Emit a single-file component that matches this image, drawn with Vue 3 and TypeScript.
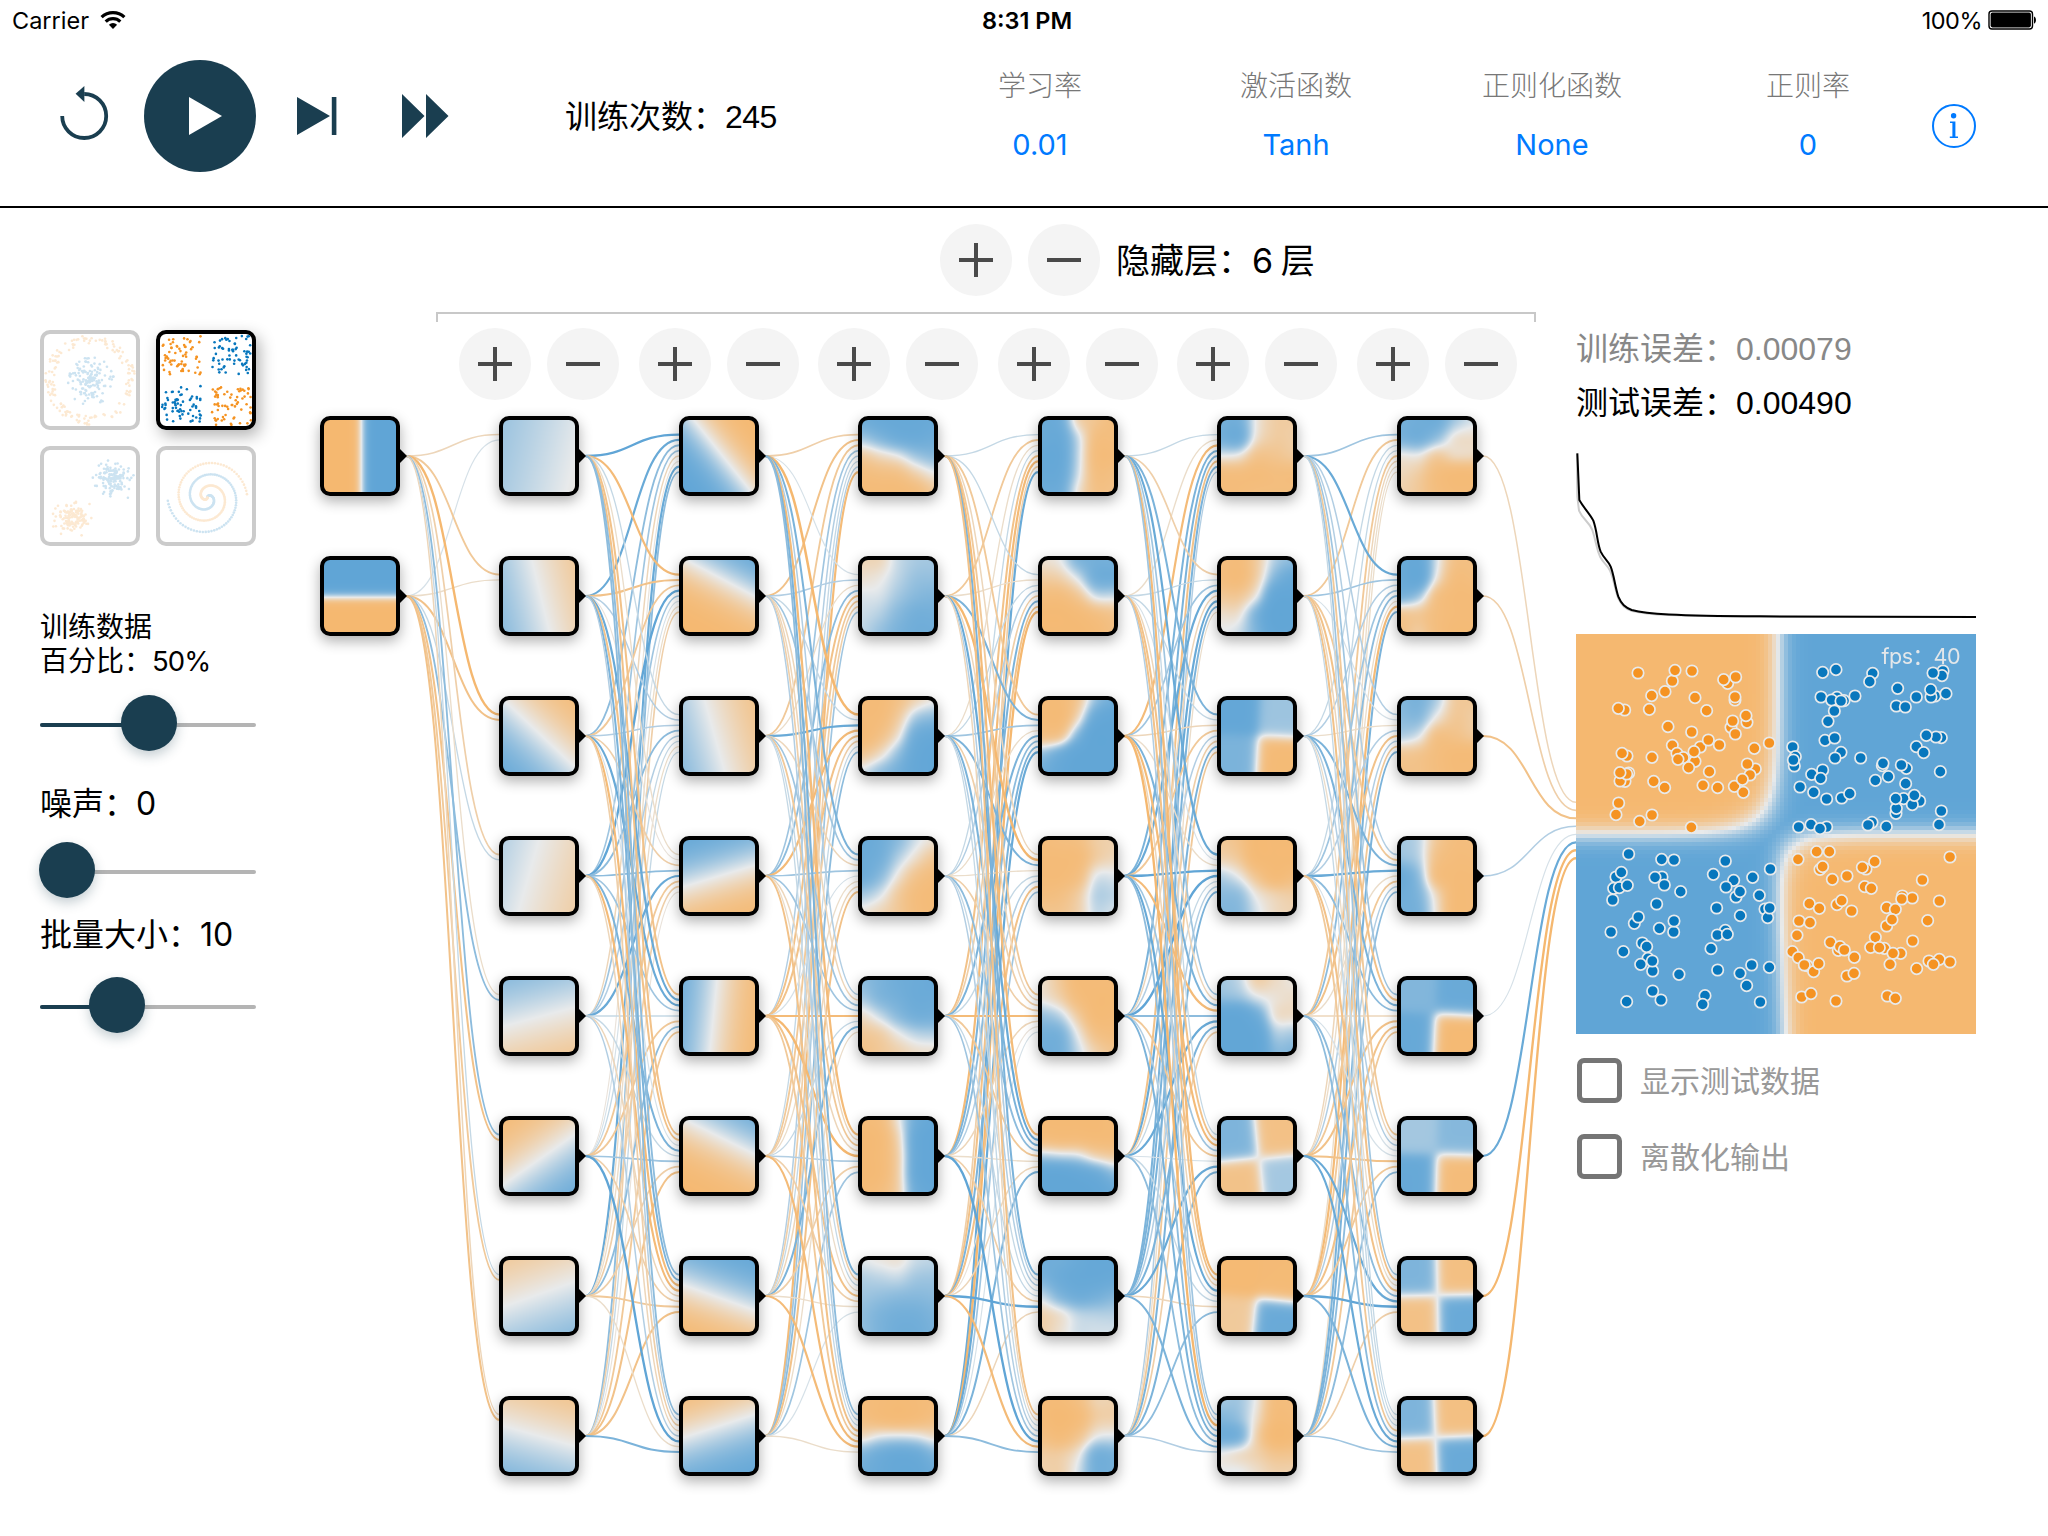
<script setup lang="ts">
import { onMounted, ref } from 'vue'

type Rgb = [number, number, number]

const ORANGE: Rgb = [245, 184, 112]
const NEUTRAL: Rgb = [232, 234, 235]
const BLUE: Rgb = [96, 165, 214]

function mix(value: number): Rgb {
  const t = Math.min(1, Math.abs(value))
  const end = value < 0 ? ORANGE : BLUE
  return [0, 1, 2].map((i) => Math.round(NEUTRAL[i] + (end[i] - NEUTRAL[i]) * t)) as Rgb
}

function parse(text: string): number[] {
  return text.trim().split(/[\s,]+/).map(Number)
}

/* ---------- network ---------- */

// A neuron's surface: three numbers are a plane (dx, dy, bias), twenty-five a 5×5 grid,
// seven are quadrant levels (tl, tr, bl, br) with the crossing point and its slant.
const surfaces: string[][] = [
  ['56 0 -1', '0 -56 1'],
  [
    '-2 -.5 1', '-4.5 1.1 .11', '-5 5.3 .2', '-2.8 -.8 -.4',
    '-1.2 -4.5 .05', '4.2 6 -.3', '1.4 4 .1', '-1.4 5 0',
  ],
  [
    '-10 8 .5', '5.3 -10 -2.6', '-5 1.4 -.3', '-2.7 -9 0',
    '-9 -.9 -.7', '4.2 -8.5 -2.3', '3.2 -9 .2', '2.6 8 1.1',
  ],
  [
    '5 6 6.5 6.5 6, 2 3.5 5 5.5 5, -2.5 -1.2 0 2 3, -5 -4.5 -4 -2 -.3, -6 -6 -6 -5 -3',
    '-1.6 -1.4 .8 1.8 2, -.8 -.3 1.2 2.4 2.6, .3 .5 2 3.2 3.6, .8 1.5 3.2 4.5 4.5, 1.2 2.5 4 5 5',
    '-6 -6 -4 -1.6 -.2, -6 -5.5 -2.5 1.8 3, -6 -4 -.5 5 6.5, -3 -1 2.5 6.5 8, .5 2.5 4.5 7 8',
    '6 5 3 .6 -.8, 5.5 4.5 1.5 -1 -3, 5 3 -.5 -3.5 -5, 2 .5 -2.5 -5 -6, -.5 -1.5 -3 -5 -6',
    '3 4 5 5.5 6, 1.8 3.5 4.5 5.5 5.5, -1 .8 3 4.5 4.5, -3 -2.2 -.2 1.2 1.5, -3.8 -3 -2 -1 -.8',
    '-6 -5 -.5 5 7, -7 -6 -1.5 6 8, -7 -6 -2 6 8, -7 -6 -2 6 8, -6 -5 -2 5 7',
    '.2 -.3 -.6 .8 1.2, 1.5 1.2 1 2 2.2, 2.2 2.6 3 3.2 3, 2.8 3.8 4.5 4.5 3.8, 2.8 4 5 5 4.2',
    '-5.5 -6 -6.5 -6 -5.5, -4.5 -5.5 -6 -5.5 -4.5, -1.2 0 .3 0 -1, 3.5 5 6 5.5 3.5, 5 6 7 7 5.5',
  ],
  [
    '6 5 -1.5 -3.5 -5, 6 6 .8 -4.5 -5, 7 6.5 1 -5 -5.5, 6.5 6 .6 -4.5 -4.5, 5.5 5 -.5 -4 -4',
    '-.8 0 3.5 4.5 4.5, -2.5 -2 .5 4.5 5, -5 -5 -3 .5 .8, -7 -7 -6 -4.5 -3.5, -7 -7 -7 -6 -4.5',
    '-6 -6 -3 2.5 5, -6 -6 -1 6 8, -4 -3 3.5 9 9, 2.5 5 8 9 9, 5 7 9 9 9',
    '-5.5 -5 -4.5 -2.5 -2, -6 -6 -5.5 -2.5 -1.5, -6 -6 -4.5 0 .3, -5 -4.5 -2.5 1.2 1.2, -3.5 -3.5 -2 .9 .6',
    '-1 -3 -6 -6 -6, -.5 -2 -5 -6.5 -6.5, 2.5 1.2 -2.5 -6 -6, 4.5 4 -.2 -4 -5, 5 4.5 1 -2 -3.5',
    '-7 -7 -7 -7 -6, -5 -5.5 -5.5 -6 -6, 1.5 1 .5 -1.5 -2.5, 8 8 7 5.5 3, 9 9 9 8 6',
    '5 5 6 7 7, 4 5.5 6.5 6.5 6, 1 3.5 5 4.5 3.5, -1.8 -.6 1.2 1.5 1.5, -2 -.8 .6 .6 .6',
    '-6 -6 -4.5 -2 -2, -6 -7 -5.5 -2.5 -2, -4.5 -5.5 -3.5 -.2 .3, -2.5 -2.5 -.5 4 4, -2 -2 .5 4.5 4.5',
  ],
  [
    '4.5 4.5 -.3 -2.3 -2.5, 4.5 4.8 -.8 -2.5 -2.3, 0 -.5 -3.5 -3.5 -2.8, -5 -5 -5.5 -5 -5, -5.5 -5.5 -5 -5 -5',
    '-5 -5.5 -2.5 1.5 3, -5 -5.5 -2 3.5 6, -3 -3 .2 7 8, -1 -.6 4 9 9, 0 .8 4 8 8',
    '.97 .55 .8 -.95 .52 .5 -.05',
    '-3 -4 -7 -7 -7, -1.8 -3 -6.5 -7 -7, 1.3 -.2 -3.5 -6 -5, 3 2.5 -.5 -2 -2.5, 3.5 3.2 .5 -1.2 -1.8',
    '2 1 -2 -1.2 -.4, 3 2.5 .5 -.6 -1, 8 8 5 -.4 -1, 9 9 7.5 2 1.8, 9 9 8 3.5 3.5',
    '.78 -.82 -.8 .5 .52 .53 .1',
    '-.97 -.95 -.65 .93 .5 .53 -.1',
    '2 2 -.4 -5 -5, 3.5 2.5 -1 -5.5 -5.5, 5 4 -2 -6.5 -6, 0 -.8 -2 -3.5 -3.5, 0 0 -1 -2 -2',
  ],
  [
    '4.5 5 5 2 .5, 4 4.5 2.5 -.5 -1, -.3 -.3 -2.5 -1.5 -1.5, -1.5 -2.5 -5 -6 -6, -2 -3 -5 -6 -6',
    '6 6.5 .5 -4 -4.5, 6 6.5 -.5 -5 -5, 4 2 -4 -6 -6, -3 -3 -5 -6 -6, -4 -2.8 -5 -6.5 -6.5',
    '3.5 4 1.5 -2.5 -3, 3 3 -.5 -3 -2.5, 1.5 .2 -4 -4 -3, -3 -3.5 -5 -6 -6, -4 -4 -5 -6 -6',
    '2 1 -3 -5 -5, 2.5 1.2 -4 -5.5 -5.5, 5.5 2.5 -4.5 -6 -6, 5 3.5 -1.5 -6 -6, 4.5 4 -.8 -6 -6',
    '.75 .93 .95 -.97 .48 .47 -.05',
    '.5 .72 .95 -.92 .5 .48 -.03',
    '.78 -.85 -.82 .93 .51 .49 .02',
    '.78 -.85 -.82 .93 .48 .52 .04',
  ],
]

// weights[layer][target] lists one weight per source neuron, from -9 to 9.
const weights: string[][] = [
  ['-3 1', '-5 -2', '-8 -6', '-4 2', '-2 5', '5 -6', '2 -5', '-3 -6'],
  [
    '8 7 5 4 -3 -1 7 5', '-7 -6 -5 8 4 1 -2 -4', '2 3 3 5 3 2 -2 2', '-2 -1 -4 5 7 -5 -4 -1',
    '-6 7 7 4 2 -5 5 -5', '-6 -6 1 6 2 4 -4 -6', '5 6 -7 -7 -3 -4 -5 -6', '5 3 -4 -3 3 8 -2 6',
  ],
  [
    '-4 -6 -5 4 3 2 3 -7', '1 3 -2 5 -6 -5 -4 4', '-9 2 7 -7 -6 -4 2 5', '6 4 -3 4 1 -2 -3 -6',
    '3 -3 4 4 -7 2 6 -2', '-7 -3 -5 -3 -8 3 -4 4', '6 -4 2 -2 -6 -4 -2 1', '5 3 2 -6 -5 -7 -7 -2',
  ],
  [
    '2 -5 -2 2 -6 -7 -4 7', '2 -2 2 3 -4 6 -6 -8', '-5 6 4 -2 6 5 6 7', '-3 -8 6 -2 2 3 -6 4',
    '-5 -3 -4 -4 -7 -3 -1 1', '-7 7 6 5 -5 -2 -3 6', '6 3 3 2 2 -4 8 -3', '-6 -3 2 3 4 8 -7 5',
  ],
  [
    '2 -2 -7 6 6 -6 6 3', '-4 2 4 7 -3 7 6 -2', '6 2 -3 -5 3 -4 6 -5', '7 1 -2 8 8 2 3 6',
    '4 -3 6 -7 5 7 6 -4', '2 -6 -7 4 -5 1 7 6', '-7 -6 -3 7 3 2 -3 5', '4 3 -8 5 6 5 6 3',
  ],
  [
    '4 -5 2 2 -5 -3 -2 -2', '7 4 3 4 5 -2 -7 6', '3 1 -2 3 -6 3 -5 6', '3 -5 6 7 -2 -5 3 5',
    '4 -6 6 5 -3 -6 -6 -5', '-5 -3 3 1 1 -6 -5 5', '4 -6 -2 -6 5 7 8 -4', '2 2 2 -5 5 7 6 4',
  ],
  ['-3 -4 -6 3 1 7 -8 -8'],
]

const NODE = 80
const COLUMN_STEP = 179.5
const ROW_STEP = 140
const NODES_TOP = 208

interface Link { d: string; stroke: string; width: number }

function buildLinks(): Link[] {
  const links: Link[] = []
  weights.forEach((targets, layer) => {
    const isOutput = layer === weights.length - 1
    const sx = layer * COLUMN_STEP + NODE + 6
    const tx = isOutput ? 1256 : (layer + 1) * COLUMN_STEP
    targets.forEach((row, target) => {
      parse(row).forEach((w, source) => {
        const sy = NODES_TOP + source * ROW_STEP + NODE / 2
        const ty = isOutput
          ? 594.3 + source * 8
          : NODES_TOP + target * ROW_STEP + NODE / 2 + (source - 4) * 5.35
        const mid = (sx + tx) / 2
        links.push({
          d: `M${sx} ${sy}C${mid} ${sy} ${mid} ${ty} ${tx} ${ty}`,
          stroke: `rgb(${mix(w / 7.5).join(',')})`,
          width: 1 + Math.abs(w) * 0.17,
        })
      })
    })
  })
  return links
}
const links = buildLinks()

function cubic(p: number[], t: number): number {
  return p[1] + 0.5 * t * (p[2] - p[0] + t * (2 * p[0] - 5 * p[1] + 4 * p[2] - p[3] + t * (3 * (p[1] - p[2]) + p[3] - p[0])))
}

function at(grid: number[], col: number, row: number): number {
  const clamp = (n: number) => Math.max(0, Math.min(4, n))
  return grid[clamp(row) * 5 + clamp(col)]
}

function quadrants(s: number[], x: number, y: number): number {
  const [tl, tr, bl, br, cx, cy, slant] = s
  const step = (n: number) => 1 / (1 + Math.exp(-24 * n))
  const right = step(x - cx - slant * (y - 0.5))
  const low = step(y - cy + slant * (x - 0.5))
  return (tl * (1 - right) + tr * right) * (1 - low) + (bl * (1 - right) + br * right) * low
}

function surface(s: number[], x: number, y: number): number {
  if (s.length === 7) return quadrants(s, x, y)
  if (s.length === 3) return Math.tanh((s[0] * (x - 0.5) + s[1] * (y - 0.5) + s[2]) / 3.6)
  const c = Math.min(3, Math.floor(x * 4))
  const r = Math.min(3, Math.floor(y * 4))
  const rows = [-1, 0, 1, 2].map((dr) =>
    cubic([-1, 0, 1, 2].map((dc) => at(s, c + dc, r + dr)), x * 4 - c))
  return Math.tanh(cubic(rows, y * 4 - r) / 3.6)
}

function paint(canvas: HTMLCanvasElement, field: (x: number, y: number) => number) {
  const n = canvas.width
  const ctx = canvas.getContext('2d')!
  const image = ctx.createImageData(n, n)
  for (let j = 0; j < n; j++) {
    for (let i = 0; i < n; i++) {
      const [r, g, b] = mix(field((i + 0.5) / n, (j + 0.5) / n))
      image.data.set([r, g, b, 255], (j * n + i) * 4)
    }
  }
  ctx.putImageData(image, 0, 0)
}

const network = ref<HTMLElement | null>(null)
const output = ref<HTMLCanvasElement | null>(null)

function corner(u: number, v: number, k: number): number {
  return -Math.log(Math.exp(-k * u) + Math.exp(-k * v)) / k
}

onMounted(() => {
  const flat = surfaces.flat()
  network.value!.querySelectorAll('canvas').forEach((canvas, i) => {
    const s = parse(flat[i])
    paint(canvas, (x, y) => surface(s, x, y))
  })
  paint(output.value!, (x, y) => {
    const topLeft = corner(0.504 - x, 0.499 - y, 15)
    const bottomRight = corner(x - 0.505 - 0.04 * (y - 0.5), y - 0.502, 20)
    return -Math.tanh(Math.max(topLeft, bottomRight) * 36)
  })
})

/* ---------- data points ---------- */

interface Dot { x: number; y: number; blue: boolean }

function dots(text: string, blue: boolean): Dot[] {
  return text.trim().split(/\s+/).map((pair) => {
    const [x, y] = pair.split(',').map(Number)
    return { x: (x - 48) / 3, y: (y - 42) / 3, blue }
  })
}

const outputDots: Dot[] = [
  ...dots(`234,159 337,183 345,151 396,153 315,215 275,227 268,268 194,270 175,265 405,233 440,272
    503,190 491,179 527,171 525,240 525,231 561,307 558,287 513,322 518,303 526,342 324,320 395,336
    337,376 351,400 370,413 354,418 421,381 445,360 478,375 405,424 402,395 386,443 448,455 429,496
    473,503 583,385 628,369 586,447 562,432 570,465 523,499 547,478 550,517 201,408 186,400 276,412
    206,459 195,484 180,483 200,462 180,458 281,484 314,503 176,549 168,584 276,585 239,604 394,622`, false),
  ...dots(`788,157 828,149 938,160 929,185 1149,153 1146,167 1119,159 1013,205 783,231 831,232 852,242
    815,240 843,243 885,228 823,273 804,304 1069,231 1125,228 1113,231 1112,209 1158,221 1009,258
    1036,261 795,361 824,354 698,381 706,410 703,438 700,420 843,397 825,414 902,414 1144,353 1128,351
    1099,346 1069,380 1091,398 967,437 969,430 1039,445 1024,435 1141,455 755,463 788,450 782,475
    720,501 761,517 800,537 845,534 869,521 946,481 985,470 1037,491 1008,580 1009,565 1031,536
    1007,536 1079,543 1057,554 1063,526 1144,573 1137,614 716,621 753,614 800,621 780,626 936,607
    924,615 979,620`, true),
  ...dots(`206,702 305,718 342,720 496,723 631,747 460,763 578,772 168,771 184,757 306,771 285,772
    313,795 161,805 178,803 202,796 158,840 362,815 521,781 498,801 528,831 540,815 598,826 290,852
    470,864 541,887 615,867 623,893 629,864 223,910 235,891 298,925 341,936 342,903 153,936 496,931
    472,945 502,943 453,986 247,969 260,980 190,995 264,1015 242,1033 278,1053 277,1023 357,1063
    473,1050 540,1060 575,1035 628,1042 560,1097 278,1113 303,1140 200,1145 435,1127 428,1153 601,1146`, true),
  ...dots(`714,718 770,695 808,695 780,748 788,740 817,778 861,768 918,747 907,742 944,725 1170,711
    1087,780 914,800 934,805 1027,828 1057,834 1025,837 1138,843 748,851 778,865 831,854 845,842
    875,873 980,863 1006,868 1103,902 717,903 750,908 711,946 980,918 996,899 946,952 1058,963
    811,967 835,991 840,980 853,990 697,995 715,1013 741,1037 733,1035 761,1055 776,1031 883,1012
    932,982 973,985 958,983 1022,1000 999,1000 990,1033 1070,1046 1107,1023 1138,1018 1120,1033
    1170,1026 861,1068 882,1060 725,1131 753,1121 828,1143 982,1128 1006,1135`, false),
]

function random(seed: number) {
  let s = seed
  return () => {
    s = (s * 1664525 + 1013904223) % 4294967296
    return s / 4294967296
  }
}

function circleSet(): Dot[] {
  const rnd = random(11)
  const list: Dot[] = []
  for (let i = 0; i < 150; i++) {
    const a = rnd() * Math.PI * 2
    const inner = rnd() * 24
    list.push({ x: 46 + Math.sin(a) * inner, y: 47 + Math.cos(a) * inner, blue: true })
    const b = rnd() * Math.PI * 2
    const outer = 36 + rnd() * 9
    list.push({ x: 46 + Math.sin(b) * outer, y: 46 + Math.cos(b) * outer, blue: false })
  }
  return list
}

function xorSet(): Dot[] {
  const rnd = random(5)
  const list: Dot[] = []
  for (let i = 0; i < 260; i++) {
    const right = i % 2 === 1
    const bottom = i % 4 > 1
    list.push({
      x: 2 + rnd() * 39 + (right ? 50 : 0),
      y: 2 + rnd() * 39 + (bottom ? 50 : 0),
      blue: right !== bottom,
    })
  }
  return list
}

function gaussSet(): Dot[] {
  const rnd = random(23)
  const bell = () => (rnd() + rnd() + rnd() + rnd() - 2) * 13
  return Array.from({ length: 280 }, (_, i) =>
    i % 2 ? { x: 69 + bell(), y: 29 + bell(), blue: true } : { x: 28 + bell(), y: 68 + bell(), blue: false })
}

function spiralSet(): Dot[] {
  const list: Dot[] = []
  for (const blue of [true, false]) {
    for (let i = 0; i < 130; i++) {
      const r = (i / 130) * 40
      const t = (1.75 * i / 130) * 2 * Math.PI + (blue ? 0 : Math.PI)
      list.push({ x: 47.4 + r * Math.sin(t), y: 47.5 - r * Math.cos(t), blue })
    }
  }
  return list
}

const datasets = [
  { name: 'circle', points: circleSet(), active: false },
  { name: 'xor', points: xorSet(), active: true },
  { name: 'gauss', points: gaussSet(), active: false },
  { name: 'spiral', points: spiralSet(), active: false },
]

const params = [
  { label: '学习率', value: '0.01' },
  { label: '激活函数', value: 'Tanh' },
  { label: '正则化函数', value: 'None' },
  { label: '正则率', value: '0' },
]

const sliders = [
  { key: 'ratio', lead: '训练数据', label: '百分比：', value: '50%', fill: 109 },
  { key: 'noise', lead: '', label: '噪声：', value: '0', fill: 27 },
  { key: 'batch', lead: '', label: '批量大小：', value: '10', fill: 77 },
]
</script>

<template>
  <div class="app">
    <div class="status">
      <div class="carrier">
        <span class="carrier-name">Carrier</span>
        <svg width="26" height="20" viewBox="0 0 26 20">
          <g fill="none" stroke="#000" stroke-width="3.2">
            <path d="M1.6 7.2A16.4 16.4 0 0 1 24.4 7.2" />
            <path d="M5.7 11.6A10.6 10.6 0 0 1 20.3 11.6" />
          </g>
          <path d="M13 19L8.9 14.7A6 6 0 0 1 17.1 14.7Z" />
        </svg>
      </div>
      <div class="clock">8:31 PM</div>
      <div class="battery">
        <span class="battery-text">100%</span>
        <svg width="50" height="20" viewBox="0 0 50 20">
          <rect x="1" y="1" width="43.5" height="18" rx="3" fill="none" stroke="#000" stroke-width="1.4" />
          <rect x="2.6" y="2.6" width="40.3" height="14.8" rx="1.8" />
          <path d="M46 6.4C48.6 7.2 48.6 12.8 46 13.6Z" />
        </svg>
      </div>
    </div>

    <header class="toolbar">
      <div class="controls">
        <svg class="reset" width="56" height="60" viewBox="56 84 56 60">
          <path d="M62.2 116A22 22 0 1 0 84.2 94" fill="none" stroke="#1a3e50" stroke-width="3.8" />
          <path d="M75.6 93.7L84.4 86V102Z" fill="#1a3e50" />
        </svg>
        <div class="play">
          <svg width="33" height="38" viewBox="0 0 33 38"><path d="M0 0L33 19L0 38Z" fill="#fff" /></svg>
        </div>
        <svg class="step" width="40" height="38" viewBox="0 0 40 38">
          <path d="M0 0L33 19L0 38ZM34.8 0H39.4V38H34.8Z" fill="#1a3e50" />
        </svg>
        <svg class="fast" width="47" height="44" viewBox="0 0 47 44">
          <path d="M0 0L22.5 22L0 44ZM24 0L46.5 22L24 44Z" fill="#1a3e50" />
        </svg>
      </div>
      <div class="epochs">训练次数：<span class="helv">245</span></div>
      <div class="params">
        <div v-for="p in params" :key="p.label" class="param">
          <div class="param-label">{{ p.label }}</div>
          <div class="param-value">{{ p.value }}</div>
        </div>
      </div>
      <svg class="info" width="46" height="46" viewBox="0 0 46 46">
        <circle cx="23" cy="23" r="21" fill="none" stroke="#007aff" stroke-width="2" />
        <circle cx="22.6" cy="12.8" r="2.7" fill="#007aff" />
        <path d="M19 18.6H24.4V33.6H27V35H18.8V33.6H21.4V20H19Z" fill="#007aff" />
      </svg>
    </header>

    <main class="body">
      <aside class="left">
        <div class="datasets">
          <div v-for="d in datasets" :key="d.name" class="dataset" :class="{ active: d.active }">
            <svg width="92" height="92" viewBox="0 0 92 92">
              <circle
                v-for="(p, i) in d.points" :key="i" :cx="p.x" :cy="p.y" r="1.3"
                :fill="p.blue ? '#0877bd' : '#f59322'"
              />
            </svg>
          </div>
        </div>
        <div v-for="s in sliders" :key="s.key" class="setting" :class="s.key">
          <div class="setting-label">
            <div v-if="s.lead">{{ s.lead }}</div>
            <div>{{ s.label }}<span class="setting-value">{{ s.value }}</span></div>
          </div>
          <div class="track">
            <div class="fill" :style="{ width: s.fill + 'px' }"><i class="thumb"></i></div>
          </div>
        </div>
      </aside>

      <section ref="network" class="network">
        <svg class="links" width="1256" height="1328" viewBox="0 0 1256 1328">
          <path
            v-for="(l, i) in links" :key="i" :d="l.d" :stroke="l.stroke" :stroke-width="l.width" fill="none"
          />
        </svg>
        <div class="layer-count">
          <i class="round plus"></i><i class="round"></i>
          <span class="layer-text">隐藏层：6 层</span>
        </div>
        <div class="bracket"></div>
        <div class="layer-buttons">
          <div v-for="n in 6" :key="n" class="pair"><i class="round plus"></i><i class="round"></i></div>
        </div>
        <div class="layers">
          <div v-for="(layer, li) in surfaces" :key="li" class="layer">
            <div v-for="(s, ni) in layer" :key="ni" class="node">
              <canvas width="72" height="72"></canvas>
            </div>
          </div>
        </div>
      </section>

      <aside class="right">
        <div class="loss train">训练误差：<span class="helv">0.00079</span></div>
        <div class="loss">测试误差：<span class="helv">0.00490</span></div>
        <svg class="chart" width="402" height="168" viewBox="48 426 1206 504">
          <g fill="none" stroke-linejoin="round">
            <path
              stroke="#ccc" stroke-width="6"
              d="M50 430L52 560L57 602C68 628 85 632 97 660C110 700 108 714 121 742C132 762 143 766 150 782C161 806 164 836 175 866C186 888 196 896 216 903C260 914 340 919 600 920L1248 921"
            />
            <path
              stroke="#000" stroke-width="6"
              d="M52 430L58 570C72 595 90 612 100 632C112 665 111 698 122 725C133 748 145 752 152 770C162 795 165 830 175 860C185 884 195 892 215 900C260 912 340 918 600 919L1248 921"
            />
          </g>
        </svg>
        <div class="output">
          <canvas ref="output" width="100" height="100"></canvas>
          <svg class="points" width="400" height="400" viewBox="0 0 400 400">
            <circle
              v-for="(p, i) in outputDots" :key="i" :cx="p.x" :cy="p.y" r="5.7"
              :fill="p.blue ? '#0877bd' : '#f59322'" stroke="#e8eaeb" stroke-width="1.7"
            />
          </svg>
          <div class="fps">fps：40</div>
        </div>
        <label class="check"><i class="box"></i><span>显示测试数据</span></label>
        <label class="check"><i class="box"></i><span>离散化输出</span></label>
      </aside>
    </main>
  </div>
</template>

<style>
body {
  background: #fff;
  overflow: hidden;
}
</style>

<style scoped>
.app {
  width: 2048px;
  height: 1536px;
  display: flex;
  flex-direction: column;
  color: #000;
  font-family: Inter, 'Noto Sans CJK SC', sans-serif;
  font-weight: 400;
  white-space: nowrap;
  overflow: hidden;
}
.helv {
  font-family: 'Liberation Sans', sans-serif;
}
.status {
  height: 40px;
  display: grid;
  grid-template-columns: 1fr auto 1fr;
  align-items: center;
  padding: 0 10px 0 12px;
  font-size: 23.5px;
}
.carrier,
.battery {
  display: flex;
  align-items: center;
}
.carrier {
  gap: 11px;
}
.clock {
  font-weight: 600;
  font-size: 23.5px;
  padding: 1px 0 0 4px;
}
.battery {
  justify-content: flex-end;
  gap: 6px;
}
.battery-text {
  font-size: 23.5px;
  letter-spacing: -0.5px;
}
.toolbar {
  height: 168px;
  box-sizing: border-box;
  border-bottom: 2px solid #000;
  display: flex;
}
.controls {
  width: 565px;
  height: 152px;
  display: flex;
  align-items: center;
}
.reset {
  margin: 0 32px 4px 56px;
}
.play {
  width: 112px;
  height: 112px;
  border-radius: 50%;
  background: #1a3e50;
  display: flex;
  align-items: center;
  padding-left: 45px;
  box-sizing: border-box;
}
.step {
  margin-left: 41px;
}
.fast {
  margin-left: 65px;
}
.epochs {
  width: 347px;
  height: 152px;
  line-height: 153px;
  font-size: 32px;
}
.epochs .helv {
  letter-spacing: -0.5px;
}
.params {
  display: flex;
  padding-top: 24px;
}
.param {
  width: 256px;
  text-align: center;
}
.param-label {
  font-size: 28px;
  line-height: 44px;
  color: #777;
  font-weight: 300;
}
.param-value {
  font-size: 29px;
  line-height: 40px;
  margin-top: 17px;
  color: #007aff;
}
.info {
  margin: 63px 0 0 -5px;
}
.body {
  flex: 1;
  display: flex;
}
.left {
  width: 320px;
  box-sizing: border-box;
  padding: 122px 64px 0 40px;
}
.datasets {
  display: grid;
  grid-template-columns: 100px 100px;
  gap: 16px;
}
.dataset {
  width: 100px;
  height: 100px;
  box-sizing: border-box;
  border: 4px solid #000;
  border-radius: 10px;
  overflow: hidden;
  opacity: 0.2;
}
.dataset svg {
  display: block;
}
.dataset.active {
  opacity: 1;
  box-shadow: 4px 6px 16px rgba(0, 0, 0, 0.3);
}
.setting-label {
  font-size: 32px;
  line-height: 44px;
}
.ratio {
  margin-top: 65px;
}
.ratio .setting-label {
  font-size: 28px;
  line-height: 33.5px;
}
.ratio .setting-value {
  font-size: 27.5px;
  letter-spacing: -0.9px;
}
.noise {
  margin-top: 55px;
}
.noise .track {
  margin-top: 44px;
}
.batch {
  margin-top: 39px;
}
.track {
  height: 4px;
  border-radius: 2px;
  background: #b4b4b4;
  margin-top: 45px;
}
.batch .track {
  margin-top: 48px;
}
.fill {
  position: relative;
  height: 4px;
  border-radius: 2px;
  background: #1a3e50;
}
.thumb {
  position: absolute;
  right: -28px;
  top: -28px;
  width: 56px;
  height: 56px;
  border-radius: 50%;
  background: #1a3e50;
  box-shadow: 0 5px 12px rgba(26, 62, 80, 0.25);
}
.network {
  position: relative;
  width: 1256px;
  box-sizing: border-box;
  padding-top: 16px;
}
.links {
  position: absolute;
  left: 0;
  top: 0;
}
.layer-count {
  display: flex;
  align-items: center;
  gap: 16px;
  padding-left: 620px;
}
.layer-text {
  font-size: 34px;
  line-height: 70px;
  padding-top: 2px;
  word-spacing: -2px;
}
.round {
  flex: none;
  width: 72px;
  height: 72px;
  border-radius: 50%;
  background:
    linear-gradient(#4a4a4a, #4a4a4a) center / 34px 4px no-repeat,
    #f4f4f4;
}
.round.plus {
  background:
    linear-gradient(#4a4a4a, #4a4a4a) center / 34px 4px no-repeat,
    linear-gradient(#4a4a4a, #4a4a4a) center / 4px 34px no-repeat,
    #f4f4f4;
}
.bracket {
  width: 1100px;
  height: 10px;
  box-sizing: border-box;
  margin: 16px 0 6px 116px;
  border: 2px solid #c8c8c8;
  border-bottom: 0;
}
.layer-buttons {
  display: flex;
  gap: 19.5px;
  padding-left: 139px;
}
.pair {
  display: flex;
  gap: 16px;
}
.layers {
  position: relative;
  display: flex;
  gap: 99.5px;
  margin-top: 16px;
  margin-left: -0.1px;
}
.layer {
  display: flex;
  flex-direction: column;
  gap: 60px;
}
.node {
  position: relative;
  width: 80px;
  height: 80px;
  box-sizing: border-box;
  border: 4px solid #000;
  border-radius: 10px;
  background: #000;
  box-shadow: 0 5px 14px rgba(0, 0, 0, 0.32);
}
.node canvas {
  display: block;
  width: 72px;
  height: 72px;
  border-radius: 6px;
}
.node::after {
  content: '';
  position: absolute;
  left: 75px;
  top: 28px;
  border: 8px solid transparent;
  border-left: 8px solid #000;
  border-right: 0;
}
.right {
  width: 400px;
  padding-top: 114px;
}
.loss {
  font-size: 32px;
  line-height: 54px;
}
.train {
  color: #888;
}
.chart {
  display: block;
  margin-top: 22px;
}
.output {
  position: relative;
  width: 400px;
  height: 400px;
  margin: 14px 0 23px;
}
.output canvas {
  display: block;
  width: 400px;
  height: 400px;
  image-rendering: pixelated;
}
.points {
  position: absolute;
  left: 0;
  top: 0;
}
.fps {
  position: absolute;
  right: 16px;
  top: 6px;
  font-size: 21.5px;
  letter-spacing: -0.5px;
  line-height: 32px;
  color: #e3e7ea;
}
.check {
  display: flex;
  align-items: center;
  gap: 18px;
  height: 46px;
  margin-bottom: 30px;
  font-size: 30px;
  color: #999;
}
.check span {
  padding-bottom: 3px;
}
.box {
  width: 45px;
  height: 45px;
  box-sizing: border-box;
  margin-left: 1px;
  border: 5px solid #757575;
  border-radius: 7px;
}
</style>
